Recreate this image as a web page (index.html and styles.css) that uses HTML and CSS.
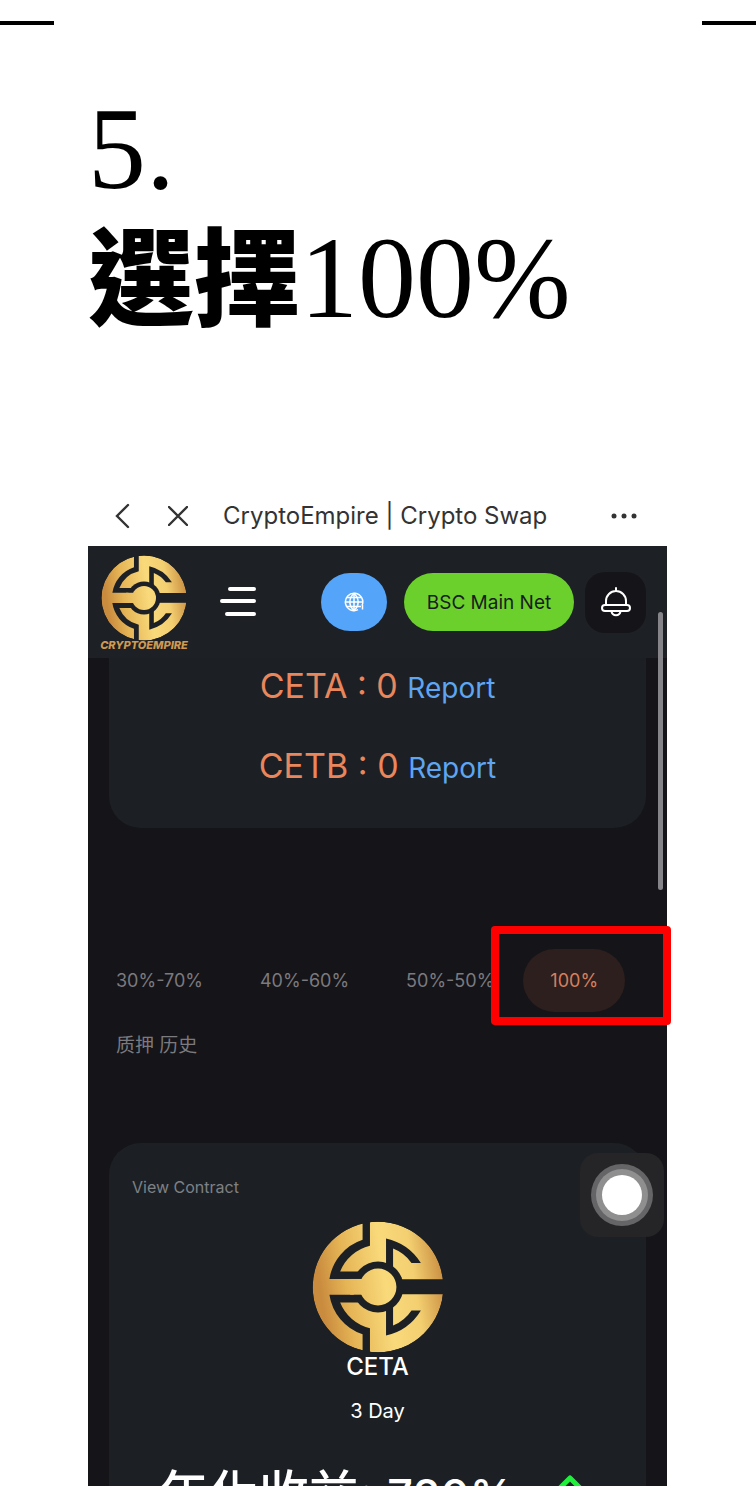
FILE: index.html
```html
<!DOCTYPE html>
<html lang="zh-Hant">
<head>
    <meta charset="UTF-8">
    <meta name="viewport" content="width=device-width, initial-scale=1.0">
    <title>CryptoEmpire | Crypto Swap</title>
    <link rel="stylesheet" href="styles.css">
</head>
<body>
    <!-- Coin mark, shared by the header and the pool card -->
    <svg class="defs" width="0" height="0" aria-hidden="true">
        <defs>
            <linearGradient id="gold" x1="0" y1="0.15" x2="1" y2="0">
                <stop offset="0" stop-color="#c98b3e"/>
                <stop offset="0.2" stop-color="#e5b455"/>
                <stop offset="0.5" stop-color="#f9da7b"/>
                <stop offset="0.72" stop-color="#f3cf70"/>
                <stop offset="1" stop-color="#bf7e36"/>
            </linearGradient>
            <mask id="cuts" maskUnits="userSpaceOnUse" x="36" y="36" width="394" height="394">
                <circle cx="233" cy="233" r="195" fill="#fff"/>
                <path d="M187 34H209V110A128 128 0 0 0 120 187H185V209H88A147 147 0 0 1 187 92Z"/>
                <path d="M257 88A165 165 0 0 1 361 161H333A120 120 0 0 0 278 118V175H257Z"/>
                <path d="M187 432H209V356A128 128 0 0 1 120 279H185V256H88A147 147 0 0 0 187 374Z"/>
                <path d="M257 378A165 165 0 0 0 361 303H333A120 120 0 0 1 278 348V291H257Z"/>
                <path d="M290 210H432V255H290Z"/>
                <circle cx="233" cy="233" r="76"/>
                <circle cx="233" cy="233" r="55" fill="#fff"/>
                <path d="M150 209H200V256H150Z" fill="#fff"/>
            </mask>
            <symbol id="coin" viewBox="36 36 394 394">
                <circle cx="233" cy="233" r="195" fill="url(#gold)" mask="url(#cuts)"/>
            </symbol>
        </defs>
    </svg>

    <div class="marks">
        <span></span>
        <span></span>
    </div>

    <main class="page">
        <h1 class="step">5.<br><b>選擇</b>100%</h1>

        <div class="phone">
            <!-- Browser bar -->
            <div class="browser-bar">
                <button class="bar-btn" aria-label="Back">
                    <svg width="16" height="26" viewBox="0 0 16 26"><path d="M14 2L3 13L14 24" fill="none" stroke="#333" stroke-width="2.400" stroke-linecap="round"/></svg>
                </button>
                <button class="bar-btn" aria-label="Close">
                    <svg width="20" height="20" viewBox="0 0 20 20"><path d="M1 1L19 19M19 1L1 19" fill="none" stroke="#333" stroke-width="2.400" stroke-linecap="round"/></svg>
                </button>
                <span class="bar-title">CryptoEmpire | Crypto Swap</span>
                <button class="bar-btn more" aria-label="More">
                    <svg width="26" height="6" viewBox="0 0 26 6" fill="#333"><circle cx="3" cy="3" r="2.500"/><circle cx="13" cy="3" r="2.500"/><circle cx="23" cy="3" r="2.500"/></svg>
                </button>
            </div>

            <div class="app">
                <header class="app-header">
                    <a class="brand" href="#">
                        <svg width="86" height="86"><use href="#coin"/></svg>
                        <span>CRYPTOEMPIRE</span>
                    </a>
                    <button class="menu" aria-label="Menu">
                        <svg width="36" height="32" viewBox="0 0 36 32"><path d="M10 3H34M2 15H34M7 28H34" stroke="#fff" stroke-width="4" stroke-linecap="round"/></svg>
                    </button>
                    <button class="pill lang" aria-label="Language">
                        <svg width="20" height="20" viewBox="0 0 20 20" fill="none" stroke="#fff" stroke-width="1.500">
                            <path d="M18 13.500A8.700 8.700 0 1 0 14 17.700M18.500 13V17.500"/>
                            <path d="M10 1.500C4.500 6 4.500 14 10 18.500C15.500 14 15.500 6 10 1.500Z"/>
                            <path d="M10 1V19M1 10H19M3 5.500H17M3 14.500H17"/>
                        </svg>
                    </button>
                    <button class="pill net">BSC Main Net</button>
                    <button class="bell" aria-label="Notifications">
                        <svg width="30" height="30" viewBox="0 0 30 30" fill="none" stroke="#fff" stroke-width="2" stroke-linecap="round">
                            <path d="M15 1V4M5 18V14A10 10 0 0 1 25 14V18"/>
                            <rect x="1" y="18" width="28" height="6" rx="3"/>
                            <path d="M10.500 24.500A4.600 4.600 0 0 0 19.500 24.500"/>
                        </svg>
                    </button>
                </header>

                <section class="card balance">
                    <p>CETA : 0 <a href="#">Report</a></p>
                    <p>CETB : 0 <a href="#">Report</a></p>
                </section>

                <nav class="tabs">
                    <button class="tab">30%-70%</button>
                    <button class="tab">40%-60%</button>
                    <button class="tab">50%-50%</button>
                    <div class="pick">
                        <button class="tab active">100%</button>
                    </div>
                    <button class="tab history">质押 历史</button>
                </nav>

                <section class="card pool">
                    <a class="contract" href="#">View Contract</a>
                    <svg class="coin" width="132" height="132"><use href="#coin"/></svg>
                    <h2>CETA</h2>
                    <p class="term">3 Day</p>
                    <!-- cut off by the bottom of the screen -->
                    <div class="yield">
                        <span>年化收益: <b>720%</b></span>
                        <svg width="28" height="18" viewBox="0 0 28 18"><path d="M2 16L14 4L26 16" fill="none" stroke="#1ff03a" stroke-width="5" stroke-linejoin="round"/></svg>
                    </div>
                    <button class="touch" aria-label="AssistiveTouch">
                        <svg width="62" height="62" viewBox="0 0 62 62">
                            <circle cx="31" cy="31" r="31" fill="#656466"/>
                            <circle cx="31" cy="31" r="26" fill="#8f8f90"/>
                            <circle cx="31" cy="31" r="20" fill="#fff"/>
                        </svg>
                    </button>
                </section>

                <div class="scrollbar"></div>
            </div>
        </div>
    </main>
</body>
</html>
```

FILE: styles.css
```css
* {
    box-sizing: border-box;
}
body {
    margin: 0;
    background-color: #fff;
    font-family: "Inter", "Noto Sans CJK SC", sans-serif;
}
button {
    border: 0;
    padding: 0;
    background: none;
    font-family: inherit;
}
svg {
    display: block;
}
a {
    text-decoration: none;
}
.defs {
    position: absolute;
}

/* Page corner marks and step title */
.marks {
    display: flex;
    justify-content: space-between;
    padding-top: 21px;
}
.marks span {
    width: 54px;
    height: 4px;
    background-color: #000;
}
.page {
    padding: 60px 89px 26px 88px;
}
.step {
    margin: 0;
    height: 400px;
    font-family: "Liberation Serif", "Noto Sans CJK TC", serif;
    font-size: 116px;
    font-weight: 400;
    line-height: 129px;
    color: #000;
}
.step b {
    font-size: 106px;
    font-weight: 900;
    line-height: 1;
}

/* Browser bar */
.browser-bar {
    display: flex;
    align-items: center;
    height: 61px;
    padding: 0 30px 0 26px;
    background-color: #fff;
}
.bar-btn + .bar-btn {
    margin-left: 38px;
}
.bar-title {
    margin-left: 35px;
    font-size: 24px;
    color: #333;
}
.browser-bar .more {
    margin-left: auto;
}

/* App */
.app {
    position: relative;
    background-color: #151419;
}
.app-header {
    display: flex;
    align-items: center;
    height: 112px;
    padding: 0 21px 0 10px;
    background-color: #1d2025;
}
.brand {
    display: flex;
    flex-direction: column;
    align-items: center;
    width: 92px;
    font-size: 11px;
    font-weight: 800;
    font-style: italic;
    line-height: 8px;
    color: #d09a50;
}
.menu {
    margin-left: 30px;
}
.pill {
    height: 58px;
    border-radius: 29px;
    font-size: 19px;
}
.lang {
    display: flex;
    align-items: center;
    justify-content: center;
    width: 66px;
    margin-left: auto;
    background-color: #54a4f9;
}
.net {
    width: 170px;
    margin-left: 17px;
    background-color: #6bd02b;
    color: #191c20;
}
.bell {
    display: flex;
    align-items: center;
    justify-content: center;
    width: 61px;
    height: 61px;
    margin-left: 11px;
    border-radius: 20px;
    background-color: #151419;
}
.card {
    margin: 0 21px;
    background-color: #1c2024;
}
.balance {
    padding: 1px 0 33px;
    border-radius: 0 0 32px 32px;
    text-align: center;
}
.balance p {
    margin: 0;
    font-size: 34px;
    line-height: 54px;
    color: #ea865c;
}
.balance p + p {
    margin-top: 24px;
}
.balance a {
    font-size: 28px;
    color: #5ea5f2;
}
.tabs {
    display: flex;
    flex-wrap: wrap;
    column-gap: 1px;
    padding: 121px 0 68px;
}
.tab {
    height: 63px;
    padding: 0 28px;
    border-radius: 32px;
    font-size: 18px;
    color: #7b7a7e;
}
.tab.active {
    padding: 0 27px;
    background-color: #2c1f1e;
    color: #d77f5c;
}
.tab.history {
    font-size: 19px;
}
.pick {
    position: relative;
}
.pick::after {
    content: "";
    position: absolute;
    inset: -23px -46px -13px -32px;
    border: 8px solid #f00;
    border-radius: 4px;
    pointer-events: none;
}

/* Pool card */
.pool {
    position: relative;
    display: flex;
    flex-direction: column;
    align-items: center;
    padding: 32px 23px 0;
    border-radius: 32px 32px 0 0;
    color: #fff;
}
.contract {
    align-self: flex-start;
    font-size: 16px;
    line-height: 24px;
    color: #7f8084;
}
.coin {
    margin-top: 22px;
}
.pool h2 {
    margin: 0;
    font-size: 24px;
    font-weight: 500;
    line-height: 28px;
}
.term {
    margin: 16px 0 0;
    font-size: 20px;
    line-height: 28px;
}
.yield {
    display: flex;
    gap: 42px;
    height: 20px;
    margin-top: 41px;
    padding-right: 12px;
    overflow: hidden;
    font-size: 50px;
    font-weight: 500;
    line-height: 56px;
}
.yield b {
    font-size: 45px;
    font-weight: 500;
}
.yield svg {
    margin-top: 8px;
}
.touch {
    position: absolute;
    top: 10px;
    right: -18px;
    display: flex;
    align-items: center;
    justify-content: center;
    width: 84px;
    height: 84px;
    border-radius: 18px;
    background-color: #252426;
}
.scrollbar {
    position: absolute;
    top: 66px;
    right: 4px;
    width: 5px;
    height: 278px;
    border-radius: 3px;
    background-color: #858589;
}
```
